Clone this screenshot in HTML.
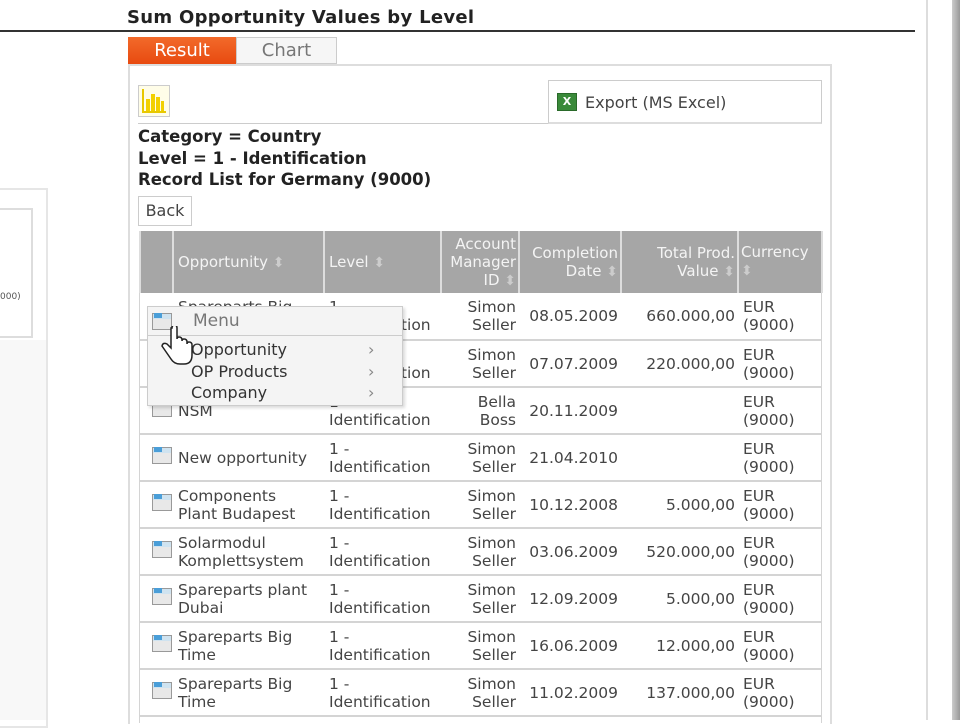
<!DOCTYPE html>
<html><head><meta charset="utf-8"><style>
*{margin:0;padding:0;box-sizing:border-box}
body{width:960px;height:720px;overflow:hidden;background:#fff;font-family:"DejaVu Sans","Liberation Sans",sans-serif;color:#333;position:relative}
.a{position:absolute}
.title{left:127px;top:7px;font-size:18px;font-weight:bold;color:#222;letter-spacing:0.3px}
table{border-collapse:collapse;table-layout:fixed;position:absolute;left:139px;top:231px;width:682px;font-size:15.5px;line-height:18px}
th{background:#a6a6a6;color:#f4f4f4;font-weight:normal;height:62px;border-left:2px solid #ddd;border-right:2px solid #ddd;padding:0 2px;vertical-align:middle;font-size:15px}
td{height:47px;border-bottom:2px solid #d4d4d4;padding:0 2px 0 5px;vertical-align:middle;color:#444}
td.r{padding:0 3px 0 0}
th.l{text-align:left;padding-left:4px}
.r{text-align:right}
.ic{display:inline-block;width:20px;height:17px;border:1px solid #999;background:linear-gradient(#cfe3f0 0 5px,#e8e8e8 5px);position:relative;margin-left:7px}
.ic:before{content:"";position:absolute;left:1px;top:-1px;width:8px;height:5px;background:#4a9ed8}
.s{color:#ccc;font-size:14px}
</style></head><body>
<div class="a title">Sum Opportunity Values by Level</div>
<div class="a" style="left:0;top:30px;width:915px;height:2px;background:#333"></div>
<div class="a" style="left:0;top:188px;width:48px;height:540px;border:2px solid #e6e6e6;border-left:none"></div>
<div class="a" style="left:0;top:208px;width:33px;height:130px;border:2px solid #ddd;border-left:none"></div>
<div class="a" style="left:0;top:292px;font-size:9px;color:#555">000)</div>
<div class="a" style="left:0;top:340px;width:46px;height:380px;background:#f8f8f8"></div>
<div class="a" style="left:926px;top:0;width:2px;height:720px;background:#ddd"></div>
<div class="a" style="left:952px;top:0;width:8px;height:720px;background:linear-gradient(90deg,#ccc,#999)"></div>
<div class="a" style="left:128px;top:37px;width:108px;height:27px;background:linear-gradient(#f26a2a,#e84a10);color:#fff;font-size:18px;text-align:center;line-height:27px">Result</div>
<div class="a" style="left:236px;top:37px;width:101px;height:27px;background:#f6f6f6;border:1px solid #ccc;color:#777;font-size:18px;text-align:center;line-height:26px">Chart</div>
<div class="a" style="left:128px;top:64px;width:704px;height:660px;border:2px solid #ddd;border-bottom:none"></div>
<div class="a" style="left:138px;top:85px;width:32px;height:32px;border:1px solid #ccc;background:#fffde8">
<svg width="30" height="30" viewBox="0 0 30 30"><rect x="3" y="3" width="2" height="24" fill="#e8c800"/><rect x="3" y="25" width="24" height="2" fill="#e8c800"/><rect x="7" y="13" width="4" height="12" fill="#f2d000"/><rect x="12" y="8" width="4" height="17" fill="#f2d000"/><rect x="17" y="11" width="4" height="14" fill="#f2d000"/><rect x="22" y="15" width="3" height="10" fill="#f2d000"/></svg></div>
<div class="a" style="left:138px;top:123px;width:410px;height:1px;background:#ccc"></div>
<div class="a" style="left:548px;top:80px;width:274px;height:44px;border:1px solid #ccc;border-bottom:2px solid #ddd"></div>
<div class="a" style="left:557px;top:93px;width:20px;height:18px;background:#3a8a3a;border:1px solid #2a6a2a;color:#fff;font-size:11px;font-weight:bold;text-align:center;line-height:16px">X</div>
<div class="a" style="left:585px;top:93px;font-size:16px;color:#444">Export (MS Excel)</div>
<div class="a" style="left:138px;top:126px;font-size:16.5px;font-weight:bold;line-height:21.5px;color:#222">Category = Country<br>Level = 1 - Identification<br>Record List for Germany (9000)</div>
<div class="a" style="left:138px;top:196px;width:54px;height:30px;border:1px solid #ccc;font-size:16px;line-height:28px;text-align:center;color:#444">Back</div>
<table>
<colgroup><col style="width:33px"><col style="width:151px"><col style="width:117px"><col style="width:78px"><col style="width:102px"><col style="width:117px"><col style="width:84px"></colgroup>
<tr><th></th><th class="l">Opportunity <span class="s">⬍</span></th><th class="l">Level <span class="s">⬍</span></th><th class="r">Account Manager ID <span class="s">⬍</span></th><th class="r">Completion Date <span class="s">⬍</span></th><th class="r">Total Prod. Value <span class="s">⬍</span></th><th style="text-align:left;vertical-align:top;padding-top:12px">Currency<br><span class="s">⬍</span></th></tr>
<tr><td><span class="ic"></span></td><td>Spareparts Big Time</td><td>1 -<br>Identification</td><td class="r">Simon Seller</td><td class="r">08.05.2009</td><td class="r">660.000,00</td><td>EUR (9000)</td></tr>
<tr><td><span class="ic"></span></td><td>Spareparts Big Time</td><td>1 -<br>Identification</td><td class="r">Simon Seller</td><td class="r">07.07.2009</td><td class="r">220.000,00</td><td>EUR (9000)</td></tr>
<tr><td><span class="ic"></span></td><td>NSM</td><td>1 -<br>Identification</td><td class="r">Bella Boss</td><td class="r">20.11.2009</td><td class="r"></td><td>EUR (9000)</td></tr>
<tr><td><span class="ic"></span></td><td>New opportunity</td><td>1 -<br>Identification</td><td class="r">Simon Seller</td><td class="r">21.04.2010</td><td class="r"></td><td>EUR (9000)</td></tr>
<tr><td><span class="ic"></span></td><td>Components<br>Plant Budapest</td><td>1 -<br>Identification</td><td class="r">Simon Seller</td><td class="r">10.12.2008</td><td class="r">5.000,00</td><td>EUR (9000)</td></tr>
<tr><td><span class="ic"></span></td><td>Solarmodul Komplettsystem</td><td>1 -<br>Identification</td><td class="r">Simon Seller</td><td class="r">03.06.2009</td><td class="r">520.000,00</td><td>EUR (9000)</td></tr>
<tr><td><span class="ic"></span></td><td>Spareparts plant Dubai</td><td>1 -<br>Identification</td><td class="r">Simon Seller</td><td class="r">12.09.2009</td><td class="r">5.000,00</td><td>EUR (9000)</td></tr>
<tr><td><span class="ic"></span></td><td>Spareparts Big Time</td><td>1 -<br>Identification</td><td class="r">Simon Seller</td><td class="r">16.06.2009</td><td class="r">12.000,00</td><td>EUR (9000)</td></tr>
<tr><td><span class="ic"></span></td><td>Spareparts Big Time</td><td>1 -<br>Identification</td><td class="r">Simon Seller</td><td class="r">11.02.2009</td><td class="r">137.000,00</td><td>EUR (9000)</td></tr>
</table>
<div class="a" style="left:139px;top:293px;width:1px;height:430px;background:#d4d4d4"></div>
<div class="a" style="left:821px;top:293px;width:1px;height:430px;background:#d4d4d4"></div>
<div class="a" style="left:147px;top:306px;width:256px;height:100px;background:#f4f4f4;border:1px solid #ccc;box-shadow:2px 2px 3px rgba(0,0,0,.15);font-size:16px;color:#333">
<div style="position:absolute;left:45px;top:4px;color:#777;font-size:17px">Menu</div>
<div style="position:absolute;left:0;top:28px;width:254px;height:1px;background:#ccc"></div>
<div style="position:absolute;left:43px;top:32px;line-height:21.5px">Opportunity<br>OP Products<br>Company</div>
<div style="position:absolute;left:220px;top:32px;line-height:21.5px;color:#888">›<br>›<br>›</div>
<span class="ic" style="position:absolute;left:-3px;top:6px"></span>
</div>
<svg class="a" style="left:160px;top:326px" width="34" height="42" viewBox="0 0 34 42"><path d="M11 2 v20 l-4-4 q-4-2-5 2 l9 13 q3 5 9 5 h4 q8 0 8-9 v-10 q0-3-3-3 q-2 0-2 2 v-2 q0-3-3-3 q-2 0-2 2 v-1 q0-3-3-3 q-2 0-2 2 v-11 q0-3-2.5-3 q-2.5 0-2.5 3z" fill="#fff" stroke="#222" stroke-width="1.5"/></svg>
</body></html>
